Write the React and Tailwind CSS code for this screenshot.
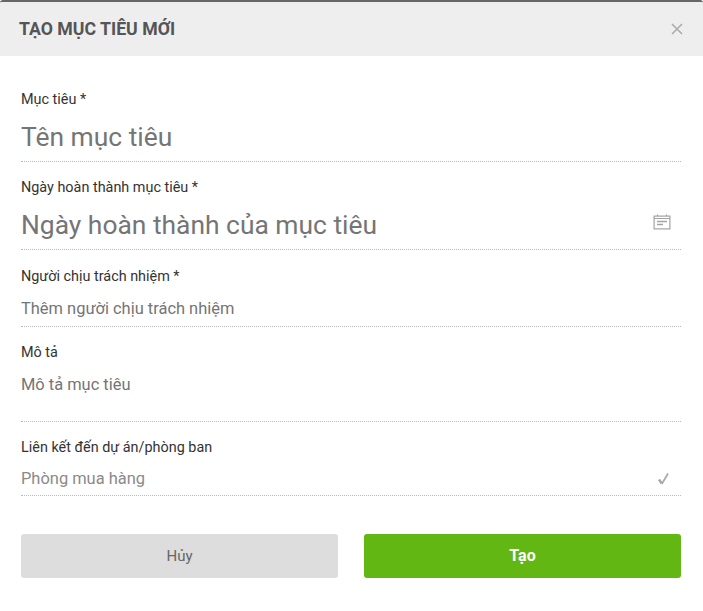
import React from 'react';

const fields = [
  { label: 'Mục tiêu *', placeholder: 'Tên mục tiêu', height: 'h-[54px]', big: true },
  { label: 'Ngày hoàn thành mục tiêu *', placeholder: 'Ngày hoàn thành của mục tiêu', height: 'h-[54px]', big: true, icon: 'calendar' },
  { label: 'Người chịu trách nhiệm *', placeholder: 'Thêm người chịu trách nhiệm', height: 'h-[42px]', space: 'mt-[17px]' },
  { label: 'Mô tả', placeholder: 'Mô tả mục tiêu', height: 'h-[61px]', top: true },
  { label: 'Liên kết đến dự án/phòng ban', placeholder: 'Phòng mua hàng', height: 'h-[40px]', icon: 'check', muted: true },
];

const CalendarIcon = () => (
  <svg width="18" height="16" viewBox="0 0 18 16" fill="none" stroke="#a3a3a3" strokeWidth="1.2" className="mr-[10px] mb-[7px]">
    <rect x="1.1" y="2.1" width="15.8" height="12.8" />
    <path d="M1 4.5H17" />
    <path d="M4.5 0.5V2M13.5 0.5V2" />
    <path d="M4 7.5H14" strokeWidth="1.4" />
    <path d="M4 10.5H10" strokeWidth="1.4" />
  </svg>
);

const CheckIcon = () => (
  <svg width="11" height="12" viewBox="0 0 11 12" fill="none" stroke="#a8a8a8" className="mr-[12px]">
    <path d="M1 6.5L3.8 10.5" strokeWidth="2.4" />
    <path d="M3.8 11L10 0.5" strokeWidth="1.7" />
  </svg>
);

const Field = ({ label, placeholder, height, big, icon, top, muted, space = 'mt-[16px]' }) => (
  <div className={`${space} first:mt-0`}>
    <div className="h-[18px] text-[14.4px] leading-[20px] text-[#333]">{label}</div>
    <div
      className={`flex justify-between border-b border-dotted border-[#bbb] ${height} ${
        top ? 'items-start pt-[12px]' : big ? 'items-center pt-[5px]' : 'items-center pt-[7px]'
      }`}
    >
      <span className={big ? 'text-[26.4px] leading-[32px] text-[#757575]' : `text-[16.45px] leading-[24px] ${muted ? 'text-[#8a8a8a]' : 'text-[#757575]'}`}>
        {placeholder}
      </span>
      {icon === 'calendar' && <CalendarIcon />}
      {icon === 'check' && <CheckIcon />}
    </div>
  </div>
);

export default function App() {
  return (
    <div className="h-[611px] w-[703px] overflow-hidden rounded-[3px] border-t-2 border-[#666] bg-white font-['Roboto',sans-serif]">
      <div className="flex h-[54px] items-center justify-between bg-[#eeeeee] pl-[19px] pr-[20px]">
        <h2 className="text-[17.7px] font-bold text-[#555]">TẠO MỤC TIÊU MỚI</h2>
        <svg width="12" height="12" viewBox="0 0 12 12" stroke="#aaa" strokeWidth="1.5">
          <path d="M1 1L11 11M11 1L1 11" />
        </svg>
      </div>
      <div className="flex flex-col pl-[21px] pr-[22px] pt-[34px]">
        {fields.map(field => (
          <Field key={field.label} {...field} />
        ))}
      </div>
      <div className="mt-[38px] flex gap-[26px] pl-[21px] pr-[22px]">
        <button className="h-[44px] flex-1 rounded-[3px] bg-[#dddddd] text-[15px] text-[#666]">Hủy</button>
        <button className="h-[44px] flex-1 rounded-[3px] bg-[#62b713] text-base font-bold text-white">Tạo</button>
      </div>
    </div>
  );
}
